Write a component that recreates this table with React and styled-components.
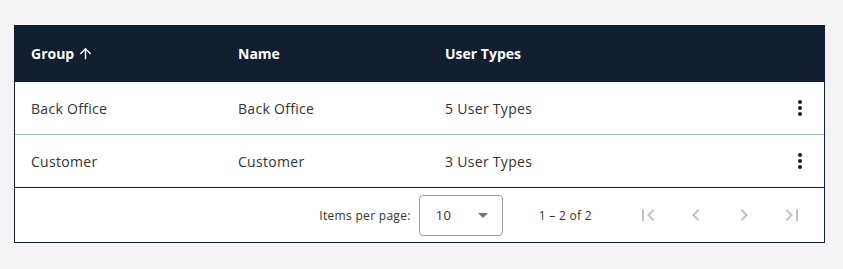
import React from "react"
import styled, { createGlobalStyle } from 'styled-components'

const GlobalStyle = createGlobalStyle`
  body {
    margin: 0;
    background: #f4f4f4;
    font-family: "Open Sans", "Liberation Sans", sans-serif;
  }
`

const Page = styled.div`
  padding: 25px 0 0 14px;
`

const Card = styled.div`
  width: 809px;
  background: #fff;
  border: 1px solid #121f30;
  border-top: none;
`

const Row = styled.div`
  display: grid;
  grid-template-columns: 207px 207px 1fr 48px;
  align-items: center;
  padding-left: 16px;
  height: ${p => p.$head ? 57 : 52}px;
  background: ${p => p.$head ? '#121f30' : '#fff'};
  color: ${p => p.$head ? '#fff' : '#333'};
  font-size: 14px;
  font-weight: ${p => p.$head ? 700 : 400};
  letter-spacing: ${p => p.$head ? 0 : 0.3}px;
  border-bottom: 1px solid ${p => p.$last ? '#121f30' : '#9fbbe0'};
  &:first-child {
    border-bottom: none;
  }
`

const HeadCell = styled.div`
  display: flex;
  align-items: center;
  gap: 3px;
`

const ActionCell = styled.div`
  display: flex;
  justify-content: center;
  color: #121f30;
`

const Footer = styled.div`
  height: 54px;
  display: flex;
  align-items: center;
  justify-content: flex-end;
  padding-right: 8px;
  font-size: 12px;
  letter-spacing: 0.3px;
  color: #333;
`

const Label = styled.span`
  margin-right: 8px;
`

const Select = styled.div`
  width: 84px;
  height: 41px;
  box-sizing: border-box;
  border: 1px solid #9e9e9e;
  border-radius: 4px;
  display: flex;
  align-items: center;
  justify-content: space-between;
  padding: 0 14px 0 16px;
  font-size: 13px;
  margin-right: 36px;
`

const Caret = styled.span`
  width: 0;
  height: 0;
  border-left: 5px solid transparent;
  border-right: 5px solid transparent;
  border-top: 5px solid #757575;
`

const Range = styled.span`
  margin-right: 32px;
`

const NavButton = styled.button`
  width: 48px;
  height: 48px;
  border: none;
  background: none;
  padding: 0;
  display: flex;
  align-items: center;
  justify-content: center;
  color: #c4c4c4;
`

const icons = {
  first: "M18.41 16.59L13.82 12l4.59-4.59L17 6l-6 6 6 6zM6 6h2v12H6z",
  prev: "M15.41 7.41L14 6l-6 6 6 6 1.41-1.41L10.83 12z",
  next: "M10 6L8.59 7.41 13.17 12l-4.58 4.59L10 18l6-6z",
  last: "M5.59 7.41L10.18 12l-4.59 4.59L7 18l6-6-6-6zM16 6h2v12h-2z",
}

const Icon = ({ d, size = 24 }) => (
  <svg width={size} height={size} viewBox="0 0 24 24" fill="currentColor">
    <path d={d} />
  </svg>
)

const MoreVert = () => (
  <svg width="24" height="24" viewBox="0 0 24 24" fill="currentColor">
    <circle cx="12" cy="6" r="2" />
    <circle cx="12" cy="12" r="2" />
    <circle cx="12" cy="18" r="2" />
  </svg>
)

const rows = [
  { group: 'Back Office', name: 'Back Office', types: '5 User Types' },
  { group: 'Customer', name: 'Customer', types: '3 User Types' },
]

const App = () => {
  return (
    <Page>
      <GlobalStyle />
      <Card>
        <Row $head>
          <HeadCell>
            Group
            <Icon size={17} d="M4 12l1.41 1.41L11 7.83V20h2V7.83l5.58 5.59L20 12l-8-8-8 8z" />
          </HeadCell>
          <HeadCell>Name</HeadCell>
          <HeadCell>User Types</HeadCell>
          <div></div>
        </Row>
        {rows.map((r, i) => (
          <Row key={r.group} $last={i === rows.length - 1}>
            <div>{r.group}</div>
            <div>{r.name}</div>
            <div>{r.types}</div>
            <ActionCell><MoreVert /></ActionCell>
          </Row>
        ))}
        <Footer>
          <Label>Items per page:</Label>
          <Select>
            10
            <Caret />
          </Select>
          <Range>1 – 2 of 2</Range>
          <NavButton><Icon d={icons.first} /></NavButton>
          <NavButton><Icon d={icons.prev} /></NavButton>
          <NavButton><Icon d={icons.next} /></NavButton>
          <NavButton><Icon d={icons.last} /></NavButton>
        </Footer>
      </Card>
    </Page>
  )
}
export default App
